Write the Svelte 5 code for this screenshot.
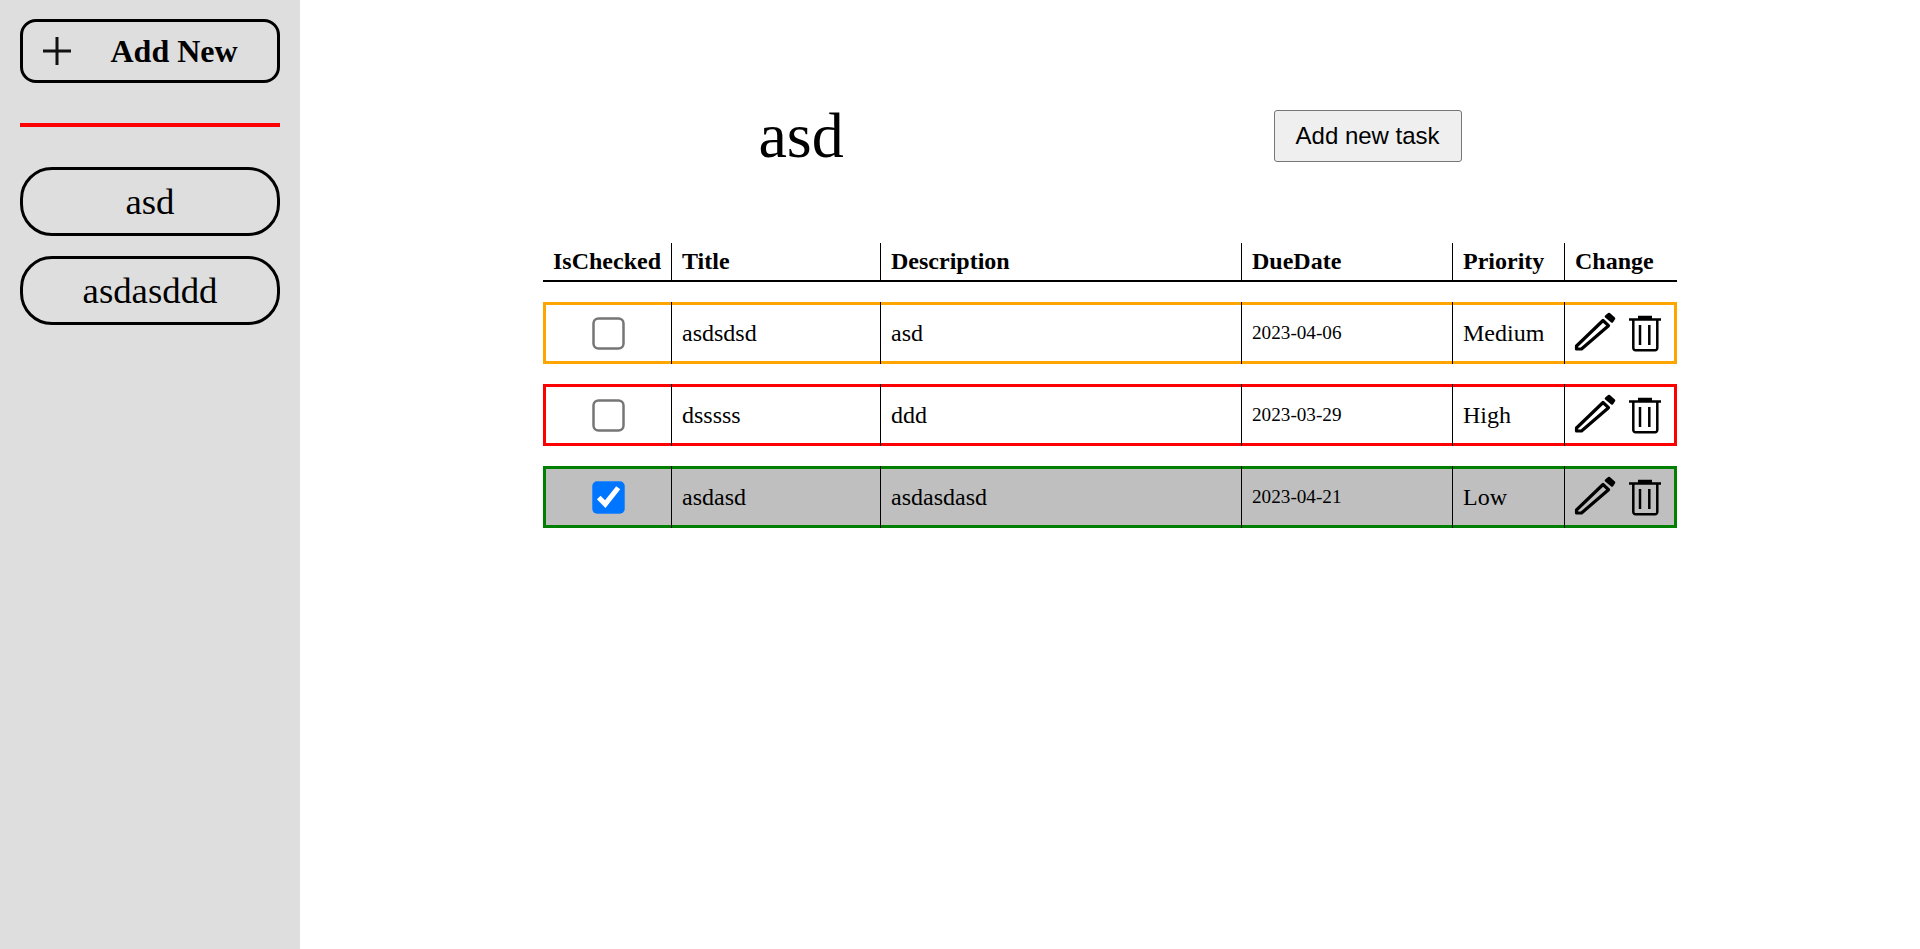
<script>
    let projects = ['asd', 'asdasddd'];

    let tasks = [
        { id: 1, done: false, title: 'asdsdsd', description: 'asd', due: '2023-04-06', priority: 'Medium' },
        { id: 2, done: false, title: 'dsssss', description: 'ddd', due: '2023-03-29', priority: 'High' },
        { id: 3, done: true, title: 'asdasd', description: 'asdasdasd', due: '2023-04-21', priority: 'Low' }
    ];
</script>

<div class="page">
    <aside class="sidebar">
        <button class="add-new">
            <svg class="plus" viewBox="0 0 28 28" width="28" height="28">
                <path d="M14 0V28M0 14H28" stroke="#111" stroke-width="3" fill="none" />
            </svg>
            <span>Add New</span>
        </button>
        <hr class="divider" />
        {#each projects as project}
            <button class="project">{project}</button>
        {/each}
    </aside>

    <main class="content">
        <div class="board">
            <header class="board-head">
                <h1>asd</h1>
                <button class="add-task">Add new task</button>
            </header>

            <div class="row head">
                <div class="cell">IsChecked</div>
                <div class="cell">Title</div>
                <div class="cell">Description</div>
                <div class="cell">DueDate</div>
                <div class="cell">Priority</div>
                <div class="cell">Change</div>
            </div>

            {#each tasks as task (task.id)}
                <div class="row task {task.priority.toLowerCase()}" class:done={task.done}>
                    <div class="cell check"><input type="checkbox" checked={task.done} /></div>
                    <div class="cell">{task.title}</div>
                    <div class="cell">{task.description}</div>
                    <div class="cell date">{task.due}</div>
                    <div class="cell">{task.priority}</div>
                    <div class="cell actions">
                        <svg class="pencil" viewBox="0 0 46 50" width="46" height="50">
                            <path d="M5.500 38L32 12.500L37.500 17.700L10.500 41H5.500Z" fill="none" stroke="#000" stroke-width="3.200" stroke-linejoin="round" />
                            <path d="M35 8.500L38 6L43 10.500L41 13.500Z" fill="#000" stroke="#000" stroke-width="2.600" stroke-linejoin="round" />
                        </svg>
                        <svg class="trash" viewBox="0 0 32 37" width="32" height="37">
                            <path d="M4.300 4.600V33a2.200 2.200 0 0 0 2.200 2.200H26a2.200 2.200 0 0 0 2.300-2.200V4.600" fill="none" stroke="#000" stroke-width="2.500" />
                            <path d="M0 4.600H32M9 2H23M11 10V30M20.300 10V30" fill="none" stroke="#000" stroke-width="2.500" />
                        </svg>
                    </div>
                </div>
            {/each}
        </div>
    </main>
</div>

<style>
    :global(body) {
        margin: 0;
        font-family: "Liberation Serif", serif;
        color: #000;
    }
    .page {
        display: flex;
        height: 949px;
        overflow: hidden;
    }
    .sidebar {
        width: 300px;
        flex: none;
        box-sizing: border-box;
        padding: 19px 20px 0;
        background-color: #dedede;
    }
    .add-new {
        display: flex;
        align-items: center;
        width: 100%;
        height: 64px;
        padding: 0 0 0 20px;
        background: transparent;
        border: 3px solid #000;
        border-radius: 16px;
        font-family: inherit;
        font-size: 32px;
        font-weight: 700;
        color: #000;
    }
    .add-new span {
        margin-left: 39.5px;
    }
    .plus {
        flex: none;
    }
    .divider {
        height: 4px;
        margin: 40px 0;
        border: none;
        background-color: #f00;
    }
    .project {
        display: block;
        width: 100%;
        height: 69px;
        margin-bottom: 20px;
        padding: 0;
        background: transparent;
        border: 3px solid #000;
        border-radius: 32px;
        font-family: inherit;
        font-size: 36.8px;
        color: #000;
    }
    .content {
        flex: 1;
        display: flex;
        justify-content: center;
    }
    .board {
        width: 1134px;
        margin-left: -1px;
    }
    .board-head {
        display: flex;
        justify-content: space-around;
        align-items: center;
        height: 243px;
        padding: 29px 0 0 1px;
        box-sizing: border-box;
    }
    h1 {
        margin: 0;
        font-size: 64px;
        font-weight: 400;
    }
    .add-task {
        width: 188px;
        height: 52px;
        padding: 0;
        background-color: #efefef;
        border: 1px solid #767676;
        border-radius: 3px;
        font-family: "Liberation Sans", sans-serif;
        font-size: 24px;
        color: #000;
    }
    .row {
        display: grid;
        grid-template-columns: 128px 209px 361px 211px 112px 1fr;
        font-size: 24px;
    }
    .head {
        height: 39px;
        margin-bottom: 20px;
        border-bottom: 2px solid #000;
        box-sizing: border-box;
        font-weight: 700;
    }
    .cell {
        display: flex;
        align-items: center;
        padding: 0 10px 0 10.5px;
        border-left: 1px solid #000;
        white-space: nowrap;
    }
    .cell:first-child {
        padding-left: 9.5px;
        border-left-color: transparent;
    }
    .task {
        height: 62px;
        margin-bottom: 20px;
    }
    .medium {
        box-shadow: inset 0 0 0 3px orange;
    }
    .high {
        box-shadow: inset 0 0 0 3px #f00;
    }
    .low {
        box-shadow: inset 0 0 0 3px green;
    }
    .done {
        background-color: #bfbfbf;
    }
    .check {
        justify-content: center;
    }
    .check input {
        width: 13px;
        height: 13px;
        margin: 0 0 0 3px;
        transform: scale(2.5);
    }
    .date {
        font-size: 19.2px;
    }
    .actions {
        gap: 12px;
        padding: 0 0 0 6px;
    }
    .pencil,
    .trash {
        flex: none;
    }
</style>
